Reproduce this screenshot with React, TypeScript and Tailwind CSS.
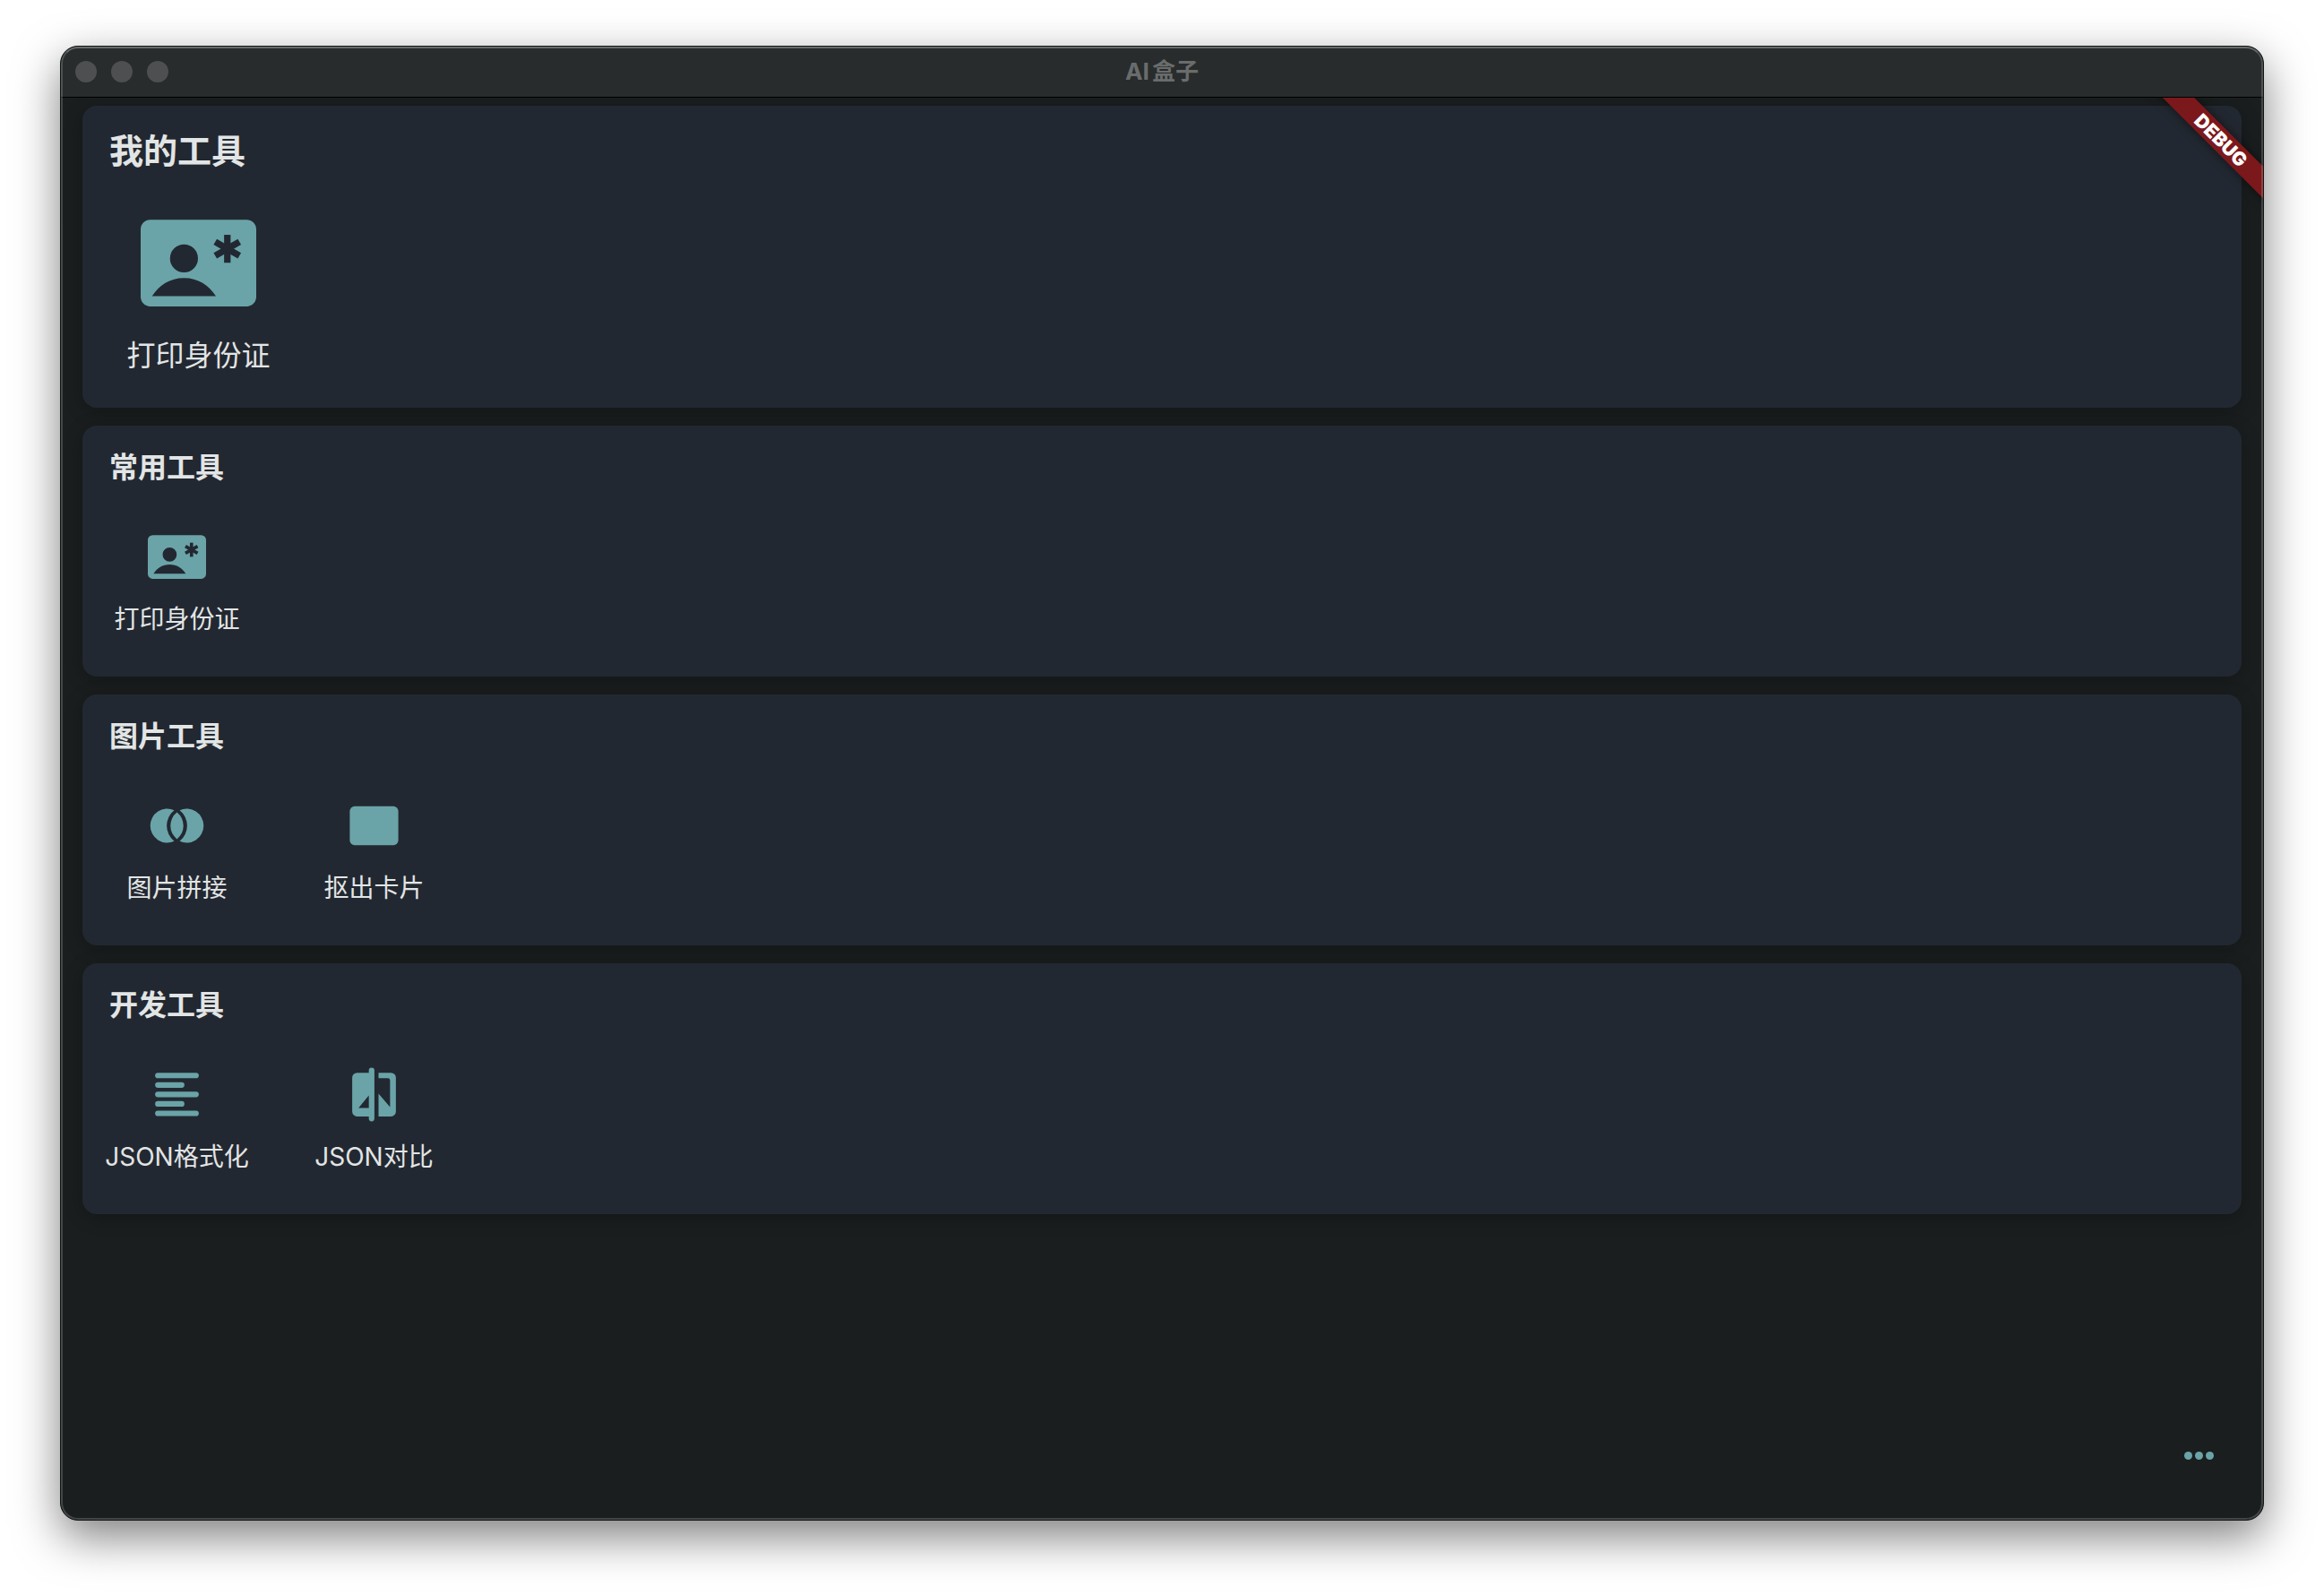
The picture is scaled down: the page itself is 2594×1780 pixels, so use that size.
import type { ReactNode } from "react";

type Tool = { label: string; icon: ReactNode };
type Group = { id: string; title: string; tools: Tool[] };

function ContactIcon() {
  return (
    <svg viewBox="0 0 24 24" fill="currentColor" fillRule="evenodd" className="size-full" aria-hidden="true">
      <path d="M2 3h20a2 2 0 0 1 2 2v14a2 2 0 0 1-2 2H2a2 2 0 0 1-2-2V5a2 2 0 0 1 2-2zM9 8.15a2.9 2.9 0 1 0 0 5.8a2.9 2.9 0 1 0 0-5.8zM2.37 18.9C3.8 16.6 6.1 15.1 9 15.1s5.2 1.5 6.63 3.8z" />
      <g className="stroke-[#222831]" strokeWidth="1.35">
        <path d="M18 6.15v5.8" />
        <path d="M18 6.15v5.8" transform="rotate(60 18 9.05)" />
        <path d="M18 6.15v5.8" transform="rotate(-60 18 9.05)" />
      </g>
    </svg>
  );
}

function JoinIcon() {
  return (
    <svg viewBox="0 0 24 24" fill="currentColor" className="size-full" aria-hidden="true">
      <path d="M10.86 5.61A7 7 0 1 0 10.86 18.39A8.2 8.2 0 0 1 10.86 5.61z" />
      <path d="M13.14 5.61A7 7 0 1 1 13.14 18.39A8.2 8.2 0 0 0 13.14 5.61z" />
      <path d="M12 6.5A7 7 0 0 1 12 17.5A7 7 0 0 1 12 6.5z" />
    </svg>
  );
}

function RectangleIcon() {
  return (
    <svg viewBox="0 0 24 24" fill="currentColor" className="size-full" aria-hidden="true">
      <rect x="2" y="4" width="20" height="16" rx="2" />
    </svg>
  );
}

function LinesIcon() {
  return (
    <svg viewBox="0 0 24 24" fill="currentColor" className="size-full" aria-hidden="true">
      <rect x="3" y="3" width="18" height="2.3" rx="1.15" />
      <rect x="3" y="6.9" width="12.1" height="2.3" rx="1.15" />
      <rect x="3" y="10.8" width="18" height="2.3" rx="1.15" />
      <rect x="3" y="14.7" width="12.1" height="2.3" rx="1.15" />
      <rect x="3" y="18.6" width="18" height="2.3" rx="1.15" />
    </svg>
  );
}

function CompareIcon() {
  return (
    <svg viewBox="0 0 24 24" fill="currentColor" fillRule="evenodd" className="size-full" aria-hidden="true">
      <path d="M9.85 3H5a2 2 0 0 0-2 2v14a2 2 0 0 0 2 2h4.85v.9a1.15 1.15 0 0 0 2.3 0V2.1a1.15 1.15 0 0 0-2.3 0zM9.85 17.5H5.6L9.85 12.4z" />
      <path d="M13.85 3H19a2 2 0 0 1 2 2v14a2 2 0 0 1-2 2h-5.15v-9.4L18.6 17.2V6.2a.9.9 0 0 0-.9-.9h-3.85z" />
    </svg>
  );
}

const groups: Group[] = [
  { id: "common", title: "常用工具", tools: [{ label: "打印身份证", icon: <ContactIcon /> }] },
  {
    id: "image",
    title: "图片工具",
    tools: [
      { label: "图片拼接", icon: <JoinIcon /> },
      { label: "抠出卡片", icon: <RectangleIcon /> },
    ],
  },
  {
    id: "dev",
    title: "开发工具",
    tools: [
      { label: "JSON格式化", icon: <LinesIcon /> },
      { label: "JSON对比", icon: <CompareIcon /> },
    ],
  },
];

const cardClass = "rounded-[16px] bg-[#222831] px-[25px] shadow-[0_4px_20px_rgba(0,0,0,0.25)]";

function MyTools() {
  return (
    <section aria-labelledby="mine" className={cardClass + " pt-6 pb-9"}>
      <h2 id="mine" className="pl-[5px] text-[38px] leading-[52px] font-bold">
        我的工具
      </h2>
      <div className="mt-[35px] flex">
        <button type="button" className="flex w-[209px] flex-col items-center gap-[17px]">
          <span className="size-[129px] text-[#6aa4a8]">
            <ContactIcon />
          </span>
          <span className="text-[32px] leading-[44px] whitespace-nowrap">打印身份证</span>
        </button>
      </div>
    </section>
  );
}

function ToolGroup({ group }: { group: Group }) {
  return (
    <section aria-labelledby={group.id} className={cardClass + " pt-[25px] pb-[46px]"}>
      <h2 id={group.id} className="pl-[5px] text-[32px] leading-[44px] font-bold">
        {group.title}
      </h2>
      <div className="mt-[45px] flex gap-[59px]">
        {group.tools.map((tool) => (
          <button key={tool.label} type="button" className="flex w-[161px] flex-col items-center gap-[19px]">
            <span className="size-[65px] text-[#6aa4a8]">{tool.icon}</span>
            <span className="text-[28px] leading-[36px] whitespace-nowrap">{tool.label}</span>
          </button>
        ))}
      </div>
    </section>
  );
}

export default function App() {
  return (
    <div className="flex min-h-screen flex-col bg-white px-[67px] pt-[51px] pb-[83px] font-[Inter,'Noto_Sans_CJK_SC',sans-serif] text-[#e2e5e5]">
      <div className="relative flex flex-1 flex-col overflow-hidden rounded-[20px] border border-[#121414] bg-[#1a1e1e] shadow-[0_18px_50px_rgba(0,0,0,0.5)]">
        <header className="relative flex h-[57px] items-center border-b border-black bg-[#282c2c] px-4">
          <div className="flex gap-4">
            <span className="size-6 rounded-full bg-[#4e4f50]" />
            <span className="size-6 rounded-full bg-[#4e4f50]" />
            <span className="size-6 rounded-full bg-[#4e4f50]" />
          </div>
          <h1 className="absolute inset-x-0 text-center text-[26px] leading-[36px] font-bold text-[#6a6c6c] [text-autospace:normal]">
            AI盒子
          </h1>
        </header>
        <main className="relative flex flex-1 flex-col overflow-hidden">
          <div className="flex flex-col gap-5 px-6 pt-[9px]">
            <MyTools />
            {groups.map((group) => (
              <ToolGroup key={group.id} group={group} />
            ))}
          </div>
          <div className="mt-auto flex justify-end p-4">
            <button type="button" aria-label="更多" className="flex size-[112px] items-center justify-center gap-[3px]">
              <span className="size-[9px] rounded-full bg-[#6aa4a8]" />
              <span className="size-[9px] rounded-full bg-[#6aa4a8]" />
              <span className="size-[9px] rounded-full bg-[#6aa4a8]" />
            </button>
          </div>
          <div className="absolute top-[35px] right-[-53px] w-[200px] rotate-45 bg-[#7b181b] text-center text-[21px] leading-[25px] font-black text-white shadow-[0_0_12px_rgba(0,0,0,0.5)]">
            DEBUG
          </div>
        </main>
        <div className="pointer-events-none absolute inset-0 rounded-[19px] border-2 border-t-white/30 border-r-white/18 border-b-white/18 border-l-white/18" />
      </div>
    </div>
  );
}
